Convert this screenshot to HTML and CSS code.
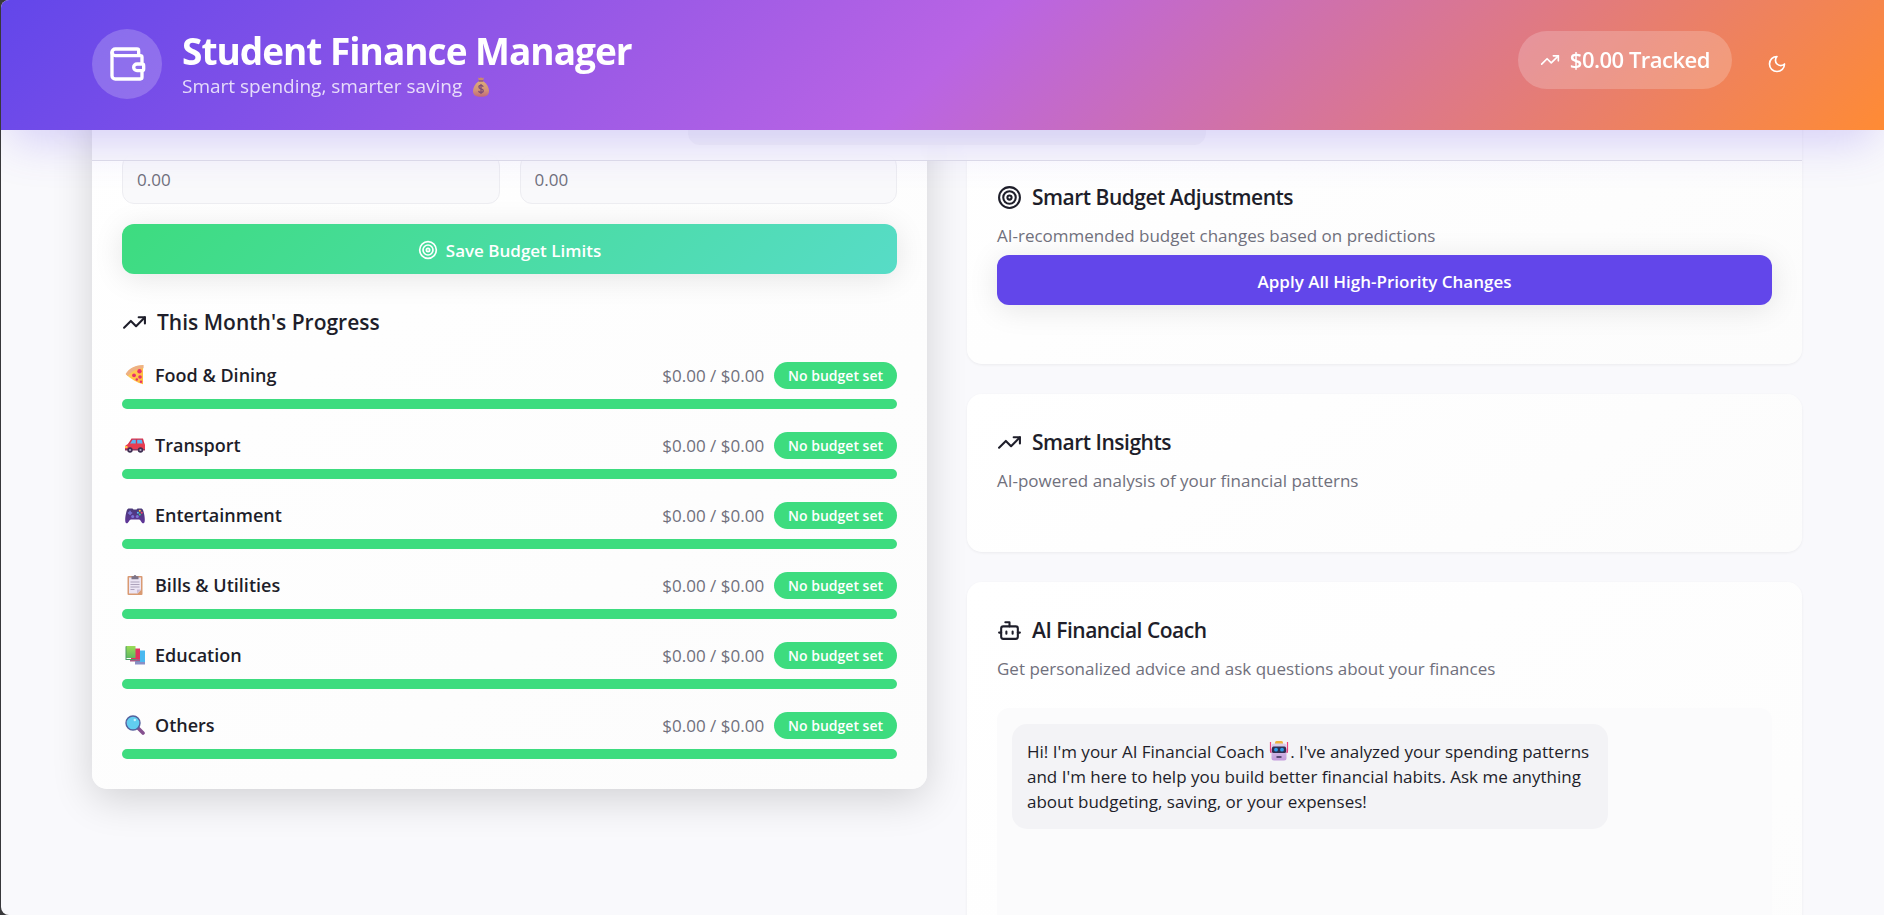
FILE: index.html
```html
<!DOCTYPE html>
<html lang="en">
<head>
<meta charset="utf-8">
<title>Student Finance Manager</title>
<link rel="stylesheet" href="styles.css">
</head>
<body>
<svg width="0" height="0" class="defs" aria-hidden="true">
  <defs>
    <linearGradient id="gold" x1="0" y1="0" x2="0" y2="1"><stop offset="0" stop-color="#f0c25c"/><stop offset=".6" stop-color="#e2a05c"/><stop offset="1" stop-color="#cf6f5c"/></linearGradient>
    <linearGradient id="cheese" x1="0" y1="0" x2="1" y2="1"><stop offset="0" stop-color="#ffd65a"/><stop offset="1" stop-color="#ffb63c"/></linearGradient>
    <linearGradient id="pad" x1="0" y1="0" x2="0" y2="1"><stop offset="0" stop-color="#4b3a78"/><stop offset="1" stop-color="#60359a"/></linearGradient>
    <linearGradient id="green" x1="0" y1="0" x2="0" y2="1"><stop offset="0" stop-color="#9bdc56"/><stop offset="1" stop-color="#5fb860"/></linearGradient>
    <linearGradient id="robot" x1="0" y1="0" x2="0" y2="1"><stop offset="0" stop-color="#dcd0ea"/><stop offset="1" stop-color="#c39bdc"/></linearGradient>
    <symbol id="i-trend" viewBox="0 0 24 24"><path d="M16 7h6v6"/><path d="m22 7-8.5 8.5-5-5L2 17"/></symbol>
    <symbol id="i-target" viewBox="0 0 24 24"><circle cx="12" cy="12" r="10"/><circle cx="12" cy="12" r="6"/><circle cx="12" cy="12" r="2"/></symbol>
  </defs>
</svg>
<div class="window">
  <header class="header">
    <div class="brand">
      <span class="brand-icon">
        <svg class="icon icon-xl" viewBox="0 0 24 24"><path d="M19 7V4a1 1 0 0 0-1-1H5a2 2 0 0 0 0 4h15a1 1 0 0 1 1 1v4h-3a2 2 0 0 0 0 4h3a1 1 0 0 0 1-1v-2a1 1 0 0 0-1-1"/><path d="M3 5v14a2 2 0 0 0 2 2h15a1 1 0 0 0 1-1v-4"/></svg>
      </span>
      <div>
        <h1 class="brand-title">Student Finance Manager</h1>
        <p class="brand-sub">Smart spending, smarter saving
          <svg class="emoji" viewBox="0 0 20 20" role="img" aria-label="Money bag"><path d="M7 0.5l1.6.8L10 .2l1.4 1.1 1.6-.8-1 3.2H8z" fill="#d9964f"/><path d="M8 4h4c4 3 6 6.500 6 10 0 4-2.500 5.800-8 5.800S2 18 2 14c0-3.500 2-7 6-10z" fill="url(#gold)"/><rect x="7.500" y="3.300" width="5" height="1.500" rx=".7" fill="#8d5a6d"/><path d="M12.200 9.800c-.3-1-1.100-1.400-2.200-1.400s-2.100.5-2.100 1.700c0 2.500 4.400 1.300 4.400 3.700 0 1.200-1 1.700-2.300 1.700s-2.200-.6-2.400-1.700M10 7v10" fill="none" stroke="#7b4b5c" stroke-width="1.300"/></svg>
        </p>
      </div>
    </div>
    <div class="header-actions">
      <span class="tracked"><svg class="icon icon-sm"><use href="#i-trend"/></svg>$0.00 Tracked</span>
      <button class="theme-btn" type="button" aria-label="Toggle theme"><svg class="icon icon-sm" viewBox="0 0 24 24"><path d="M12 3a6 6 0 0 0 9 9 9 9 0 1 1-9-9Z"/></svg></button>
    </div>
  </header>
  <nav class="tabs" aria-label="Sections"><div class="tab-list"></div></nav>

  <main class="columns">
    <section class="card card-raised">
      <form class="budget-form">
        <div class="field-row">
          <input class="field" type="text" placeholder="0.00" aria-label="Education budget">
          <input class="field" type="text" placeholder="0.00" aria-label="Others budget">
        </div>
        <button class="btn btn-save" type="button"><svg class="icon icon-sm"><use href="#i-target"/></svg>Save Budget Limits</button>
      </form>
      <h2 class="card-title progress-title"><svg class="icon icon-md"><use href="#i-trend"/></svg>This Month's Progress</h2>
      <ul class="progress-list">
        <li>
          <div class="progress-row"><svg class="emoji" viewBox="0 0 20 20" aria-hidden="true"><path d="M1 9.500C5 3 11 .8 18 .3v19C12 17.500 6 14 1 9.500z" fill="url(#cheese)"/><path d="M.6 9C4 3 11 0 18.600 0v3.200C12 3.500 6.500 6 3 11.300z" fill="#eeb183"/><g fill="#e8306b"><circle cx="14.500" cy="6.300" r="2.200"/><circle cx="9" cy="10.300" r="1.900"/><circle cx="15" cy="12" r="1.800"/><circle cx="11.800" cy="14.500" r="1.200"/><circle cx="16" cy="16.800" r="1.200"/></g></svg><span class="name">Food &amp; Dining</span><span class="amount">$0.00 / $0.00</span><span class="badge">No budget set</span></div>
          <div class="bar"></div>
        </li>
        <li>
          <div class="progress-row"><svg class="emoji" viewBox="0 0 20 20" aria-hidden="true"><path d="M6.500 3.500H18L19.500 9H3z" fill="#d9304b"/><path d="M7.500 4.800h3.300V9H4.800zM12.200 4.800h4.600L17.800 9h-5.600z" fill="#5cb4f2"/><path d="M0 11 3.500 8.500H19q1 0 1 1.500v5H0z" fill="#e83c50"/><path d="M0 11h2.500v2H0z" fill="#ffc54d"/><path d="M0 14h20v1.500H0z" fill="#8f3b63"/><g fill="#3d2f52"><circle cx="5" cy="15" r="2.700"/><circle cx="15.500" cy="15" r="2.700"/></g><g fill="#b9a6c9"><circle cx="5" cy="15" r="1.100"/><circle cx="15.500" cy="15" r="1.100"/></g></svg><span class="name">Transport</span><span class="amount">$0.00 / $0.00</span><span class="badge">No budget set</span></div>
          <div class="bar"></div>
        </li>
        <li>
          <div class="progress-row"><svg class="emoji" viewBox="0 0 20 20" aria-hidden="true"><path d="M4 3.500h3.500l1 1h3l1-1H16c1.600 0 2.200 1.500 2.800 4 1 4 1.800 10.500-.4 10.800-2 .2-2.600-3.800-4.400-3.800H6c-1.800 0-2.400 4-4.400 3.800C-.6 18 .2 11.500 1.200 7.500 1.800 5 2.400 3.500 4 3.500z" fill="url(#pad)"/><g fill="#7b74d6"><path d="M4.300 5.800h1.500v1.400h1.400v1.500H5.800v1.400H4.300V8.700H2.900V7.200h1.400z"/><circle cx="7.700" cy="11.500" r="1.500"/><circle cx="12.300" cy="11.500" r="1.500"/></g><circle cx="14.800" cy="5.800" r="1" fill="#ffc83d"/><circle cx="16.700" cy="7.700" r="1" fill="#ef4968"/><circle cx="14.800" cy="9.600" r="1" fill="#3edc81"/><circle cx="12.900" cy="7.700" r="1" fill="#4fc3f7"/></svg><span class="name">Entertainment</span><span class="amount">$0.00 / $0.00</span><span class="badge">No budget set</span></div>
          <div class="bar"></div>
        </li>
        <li>
          <div class="progress-row"><svg class="emoji" viewBox="0 0 20 20" aria-hidden="true"><rect x="2.500" y="1" width="15" height="19" rx="1" fill="#d99a72"/><path d="M4 2.500h12V15l-3.500 3.500H4z" fill="#ece5f4"/><path d="M16 14.500l-4 4v-4z" fill="#cbbdd9"/><path d="M6.500 1.200h2Q10-1 11.500 1.200h2v3h-7z" fill="#7d7488"/><path d="M5.500 7h9M5.500 9.500h9M5.500 12h9M5.500 14.500h4" stroke="#a79bb5" stroke-width=".9"/></svg><span class="name">Bills &amp; Utilities</span><span class="amount">$0.00 / $0.00</span><span class="badge">No budget set</span></div>
          <div class="bar"></div>
        </li>
        <li>
          <div class="progress-row"><svg class="emoji" viewBox="0 0 20 20" aria-hidden="true"><path d="M11 5.500h9V19H10z" fill="#49b9f0"/><path d="M10 17h10v2.500H10z" fill="#8b8fc4"/><path d="M6 3.500h9V15H6z" fill="#e0335f"/><path d="M5 14h10v2.500H5z" fill="#a65a86"/><path d="M1 1h9.500v12H1z" fill="url(#green)"/><path d="M.5 1.500 1.500 1v13H10.500v1H.5z" fill="#4b9a66"/></svg><span class="name">Education</span><span class="amount">$0.00 / $0.00</span><span class="badge">No budget set</span></div>
          <div class="bar"></div>
        </li>
        <li>
          <div class="progress-row"><svg class="emoji" viewBox="0 0 20 20" aria-hidden="true"><path d="M13 13l5 5" stroke="#85508f" stroke-width="3.600" stroke-linecap="round"/><circle cx="8" cy="8" r="7" fill="#61cdf0" stroke="#53609d" stroke-width="1.400"/><circle cx="9.800" cy="5" r="1.200" fill="#c8f1fc"/></svg><span class="name">Others</span><span class="amount">$0.00 / $0.00</span><span class="badge">No budget set</span></div>
          <div class="bar"></div>
        </li>
      </ul>
    </section>

    <div class="stack">
      <section class="card card-flat card-scrolled">
        <h2 class="card-title"><svg class="icon icon-md"><use href="#i-target"/></svg>Smart Budget Adjustments</h2>
        <p class="card-desc">AI-recommended budget changes based on predictions</p>
        <button class="btn btn-primary" type="button">Apply All High-Priority Changes</button>
      </section>
      <section class="card card-flat">
        <h2 class="card-title"><svg class="icon icon-md"><use href="#i-trend"/></svg>Smart Insights</h2>
        <p class="card-desc">AI-powered analysis of your financial patterns</p>
      </section>
      <section class="card card-flat">
        <h2 class="card-title"><svg class="icon icon-md" viewBox="0 0 24 24"><path d="M12 8V4H8"/><rect width="16" height="12" x="4" y="8" rx="2"/><path d="M2 14h2M20 14h2M15 13v2M9 13v2"/></svg>AI Financial Coach</h2>
        <p class="card-desc">Get personalized advice and ask questions about your finances</p>
        <div class="chat">
          <p class="bubble">Hi! I'm your AI Financial Coach <svg class="emoji" viewBox="0 0 20 20" role="img" aria-label="Robot"><path d="M1.500 1v9M18.500 1v9" stroke="#f0427e" stroke-width="1.200"/><rect x="6" y="0" width="8" height="4" rx="1.500" fill="#f0b23e"/><rect x="1" y="7.500" width="18" height="4.500" rx="1" fill="#e0407c"/><rect x="2.500" y="2.500" width="15" height="17" rx="2.500" fill="url(#robot)"/><rect x="3" y="5.500" width="14" height="6.500" rx="1.500" fill="#2f2f52"/><circle cx="7" cy="8.700" r="1.900" fill="#2c9be8"/><circle cx="13" cy="8.700" r="1.900" fill="#2c9be8"/><rect x="7.500" y="15" width="5" height="2" fill="#5a4a78"/></svg>. I've analyzed your spending patterns and I'm here to help you build better financial habits. Ask me anything about budgeting, saving, or your expenses!</p>
        </div>
      </section>
    </div>
  </main>
</div>
</body>
</html>
```
FILE: styles.css
```css
* { box-sizing: border-box; }

body {
  margin: 0;
  background: #38383b;
  color: #1e1e2a;
  font-family: "Open Sans", "Noto Sans", sans-serif;
  font-size: 17px;
  line-height: 25px;
}

h1, h2, p, ul { margin: 0; padding: 0; }
.defs { position: absolute; }

.window {
  height: 100vh;
  margin-left: 1px;
  overflow: hidden;
  border-radius: 8px 0 0 8px;
  background: #f9f9fc;
}

.icon {
  flex: none;
  fill: none;
  stroke: currentColor;
  stroke-width: 2;
  stroke-linecap: round;
  stroke-linejoin: round;
}
.icon-sm { width: 20px; height: 20px; }
.icon-md { width: 25px; height: 25px; }
.icon-xl { width: 40px; height: 40px; }
.emoji { flex: none; width: 20px; height: 20px; }

/* Header */
.header {
  position: relative;
  z-index: 3;
  display: flex;
  align-items: center;
  justify-content: space-between;
  padding: 28px 82px 31px 91px;
  background: linear-gradient(135deg, #6246ea 0%, #b964e4 50%, #ff8b34 100%);
  box-shadow: 0 20px 46px -10px rgba(98, 70, 234, 0.25);
  color: #fff;
}
.brand { display: flex; align-items: center; gap: 20px; }
.brand-icon {
  display: grid;
  place-items: center;
  width: 70px;
  height: 70px;
  border-radius: 50%;
  background: rgba(255, 255, 255, 0.2);
}
.brand-title { font-size: 37px; line-height: 46px; font-weight: 700; letter-spacing: -1px; }
.brand-sub { font-size: 19px; line-height: 25px; opacity: 0.8; }
.brand-sub .emoji { margin-left: 4px; vertical-align: -4px; }
.header-actions { display: flex; align-items: center; gap: 20px; }
.tracked {
  display: flex;
  align-items: center;
  gap: 10px;
  height: 58px;
  margin-bottom: 8px;
  padding: 0 22px;
  border-radius: 29px;
  background: rgba(255, 255, 255, 0.2);
  font-size: 22px;
  font-weight: 600;
  letter-spacing: -0.5px;
}
.theme-btn {
  display: grid;
  place-items: center;
  width: 50px;
  height: 50px;
  padding: 0;
  border: 0;
  border-radius: 12px;
  background: none;
  color: inherit;
}

/* Sticky tab strip */
.tabs {
  position: relative;
  z-index: 2;
  height: 31px;
  margin: 0 82px 0 91px;
  border-bottom: 1px solid #e0dfe9;
  background: rgba(249, 249, 252, 0.85);
  backdrop-filter: blur(8px);
}
.tab-list {
  width: 518px;
  height: 15px;
  margin: 0 auto;
  border-radius: 0 0 12px 12px;
  background: #f3f3f7;
}

/* Columns */
.columns {
  display: grid;
  grid-template-columns: 1fr 1fr;
  align-items: start;
  gap: 40px;
  margin: -71px 82px 0 91px;
}
.stack { display: grid; gap: 30px; }
.card {
  border-radius: 15px;
  background: linear-gradient(145deg, #fff, #fcfcfc);
}
.card-raised {
  padding: 64px 30px 30px;
  box-shadow: 0 10px 40px rgba(0, 0, 0, 0.16);
}
.card-flat {
  padding: 33px 30px 59px;
  box-shadow: 0 1px 3px rgba(0, 0, 0, 0.06);
}
.card-scrolled { padding-top: 92px; }

.card-title {
  display: flex;
  align-items: center;
  gap: 10px;
  font-size: 21px;
  line-height: 30px;
  font-weight: 600;
  letter-spacing: -0.5px;
}
.card-desc { margin-top: 11px; color: #70707c; }

/* Budget form */
.field-row { display: grid; grid-template-columns: 1fr 1fr; gap: 20px; }
.field {
  width: 100%;
  height: 50px;
  padding: 0 14px;
  border: 1px solid #ededf1;
  border-radius: 12px;
  background: #f9f9fb;
  font: inherit;
}
.field::placeholder { color: #70707c; opacity: 1; }
.btn {
  display: flex;
  align-items: center;
  justify-content: center;
  gap: 8px;
  width: 100%;
  height: 50px;
  padding: 2px 0 0;
  border: 0;
  border-radius: 12px;
  box-shadow: 0 4px 30px rgba(0, 0, 0, 0.1);
  color: #fff;
  font: inherit;
  font-weight: 600;
}
.btn-save { margin-top: 20px; background: linear-gradient(135deg, #3ddc7f, #57dcc7); }
.btn-primary { margin-top: 7px; background: #6246ea; }

/* Monthly progress */
.progress-title { margin: 33px 0 24px; letter-spacing: normal; }
.progress-list { display: grid; gap: 22px; list-style: none; }
.progress-row { display: flex; align-items: center; height: 28px; margin-bottom: 10px; padding-left: 3px; }
.name { flex: 1; margin-left: 10px; font-size: 18px; font-weight: 600; }
.amount { color: #70707c; }
.badge {
  margin-left: 10px;
  padding: 1px 14px;
  border-radius: 14px;
  background: #3ddc7f;
  color: #fff;
  font-size: 14px;
  font-weight: 600;
}
.bar { height: 10px; border-radius: 5px; background: #3ddc7f; }

/* Coach chat */
.chat {
  min-height: 400px;
  margin-top: 27px;
  padding: 16px 15px;
  border-radius: 12px;
  background: #fbfbfc;
}
.bubble {
  width: 80%;
  padding: 15px;
  border-radius: 15px;
  background: #f3f3f6;
}
.bubble .emoji { margin-right: 1px; vertical-align: -3px; }
```
